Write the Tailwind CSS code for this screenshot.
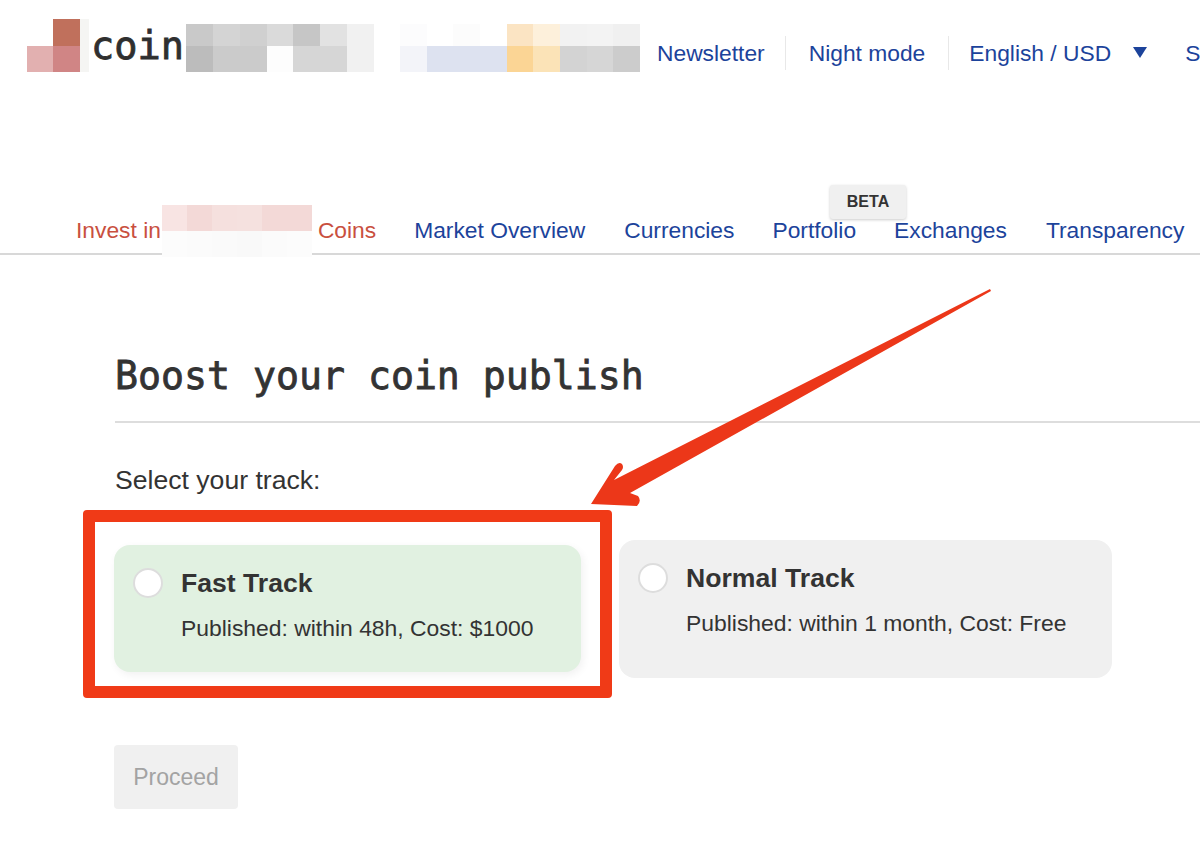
<!DOCTYPE html>
<html lang="en">
  <head>
    <meta charset="UTF-8" />
    <meta name="viewport" content="width=device-width, initial-scale=1.0" />
    <script src="https://cdn.jsdelivr.net/npm/@tailwindcss/browser@4"></script>
    <title>Boost your coin publish</title>
  </head>
  <body class="bg-white">
    <div class="relative w-[1200px] h-[846px] overflow-hidden font-['Liberation_Sans',Arial,sans-serif] text-[#333]">
      <!-- top bar -->
      <header class="flex items-start pl-[27px] pt-[19px] h-[130px] w-[1200px]">
        <div class="shrink-0 grid grid-cols-[26px_27px_9px] grid-rows-[27px_26px]">
          <div></div>
          <div class="bg-[#c0705c]"></div>
          <div class="bg-[#f5f5f3]"></div>
          <div class="bg-[#e2b0b0]"></div>
          <div class="bg-[#d08585]"></div>
          <div class="bg-[#f5f5f3]"></div>
        </div>
        <span class="shrink-0 ml-[2px] mt-[4px] w-[95px] font-['DejaVu_Sans_Mono',monospace] text-[38.6px] leading-[46px] text-[#2f2f2f] [-webkit-text-stroke:0.8px_#2f2f2f]">coin</span>
        <div class="shrink-0 mt-[5px] grid grid-cols-7 grid-rows-[22px_26px] w-[188px]">
          <div class="bg-[#c9c9c9]"></div><div class="bg-[#d4d4d4]"></div><div class="bg-[#d0d0d0]"></div><div class="bg-[#dadada]"></div><div class="bg-[#c6c6c6]"></div><div class="bg-[#e2e2e2]"></div><div class="bg-[#f1f1f1]"></div>
          <div class="bg-[#bcbcbc]"></div><div class="bg-[#cbcbcb]"></div><div class="bg-[#cbcbcb]"></div><div class="bg-[#fdfdfd]"></div><div class="bg-[#d6d6d6]"></div><div class="bg-[#d6d6d6]"></div><div class="bg-[#f1f1f1]"></div>
        </div>
        <div class="shrink-0 ml-[26px] mt-[5px] grid grid-cols-9 grid-rows-[22px_26px] w-[240px]">
          <div class="bg-[#fcfcfd]"></div><div class="bg-white"></div><div class="bg-[#fcfcfc]"></div><div class="bg-white"></div><div class="bg-[#fbe4c3]"></div><div class="bg-[#fdf0db]"></div><div class="bg-[#f2f2f2]"></div><div class="bg-[#f3f3f3]"></div><div class="bg-[#f0f0f0]"></div>
          <div class="bg-[#f3f4f9]"></div><div class="bg-[#dde2f0]"></div><div class="bg-[#dde2f0]"></div><div class="bg-[#dde2f0]"></div><div class="bg-[#fbd595]"></div><div class="bg-[#fbe3b7]"></div><div class="bg-[#d3d3d3]"></div><div class="bg-[#d6d6d6]"></div><div class="bg-[#cccccc]"></div>
        </div>
        <nav class="shrink-0 ml-[17px] mt-[17px] flex items-center whitespace-nowrap text-[22.8px] leading-[34px] text-[#1c439b]">
          <a class="pr-[20px] border-r border-[#e8e8e8]">Newsletter</a>
          <a class="px-[23px] border-r border-[#e8e8e8]">Night mode</a>
          <a class="pl-[20px]">English / USD</a>
          <svg class="ml-[22px] mt-[-2px]" width="14" height="11" viewBox="0 0 14 11"><polygon points="0,0 14,0 7,11" fill="#1c439b" /></svg>
          <a class="ml-[38px]">S</a>
        </nav>
      </header>

      <!-- main nav -->
      <nav class="relative flex items-end h-[125px] pl-[76px] border-b-2 border-[#d8d8d8] whitespace-nowrap text-[22.8px] leading-[34px] text-[#1c439b] w-[1200px]">
        <a class="mb-[6px] text-[#c9503f]">Invest in</a>
        <div class="ml-[1px] -mb-[4px] grid grid-cols-6 grid-rows-[26px_26px] w-[150px]">
          <div class="bg-[#f8e4e3]"></div><div class="bg-[#f3d9d7]"></div><div class="bg-[#f5e0de]"></div><div class="bg-[#f5e1df]"></div><div class="bg-[#f3d9d7]"></div><div class="bg-[#f3d9d7]"></div>
          <div class="bg-[#fcfcfc]"></div><div class="bg-[#fbfbfb]"></div><div class="bg-[#fafafa]"></div><div class="bg-[#f9f9f9]"></div><div class="bg-[#fbfbfb]"></div><div class="bg-[#fcfcfc]"></div>
        </div>
        <a class="mb-[6px] ml-[6px] text-[#c9503f]">Coins</a>
        <a class="mb-[6px] ml-[38px]">Market Overview</a>
        <a class="mb-[6px] ml-[39px]">Currencies</a>
        <a class="mb-[6px] ml-[38px]">Portfolio</a>
        <a class="mb-[6px] ml-[38px]">Exchanges</a>
        <a class="mb-[6px] ml-[39px]">Transparency</a>
        <span class="absolute left-[830px] top-[55px] w-[76px] h-[34px] flex items-center justify-center rounded-[3px] bg-[#f0f0f0] shadow-[0_1px_3px_rgba(0,0,0,0.2)] text-[16px] font-bold text-[#333]">BETA</span>
      </nav>

      <!-- form -->
      <main class="pl-[115px]">
        <h1 class="mt-[95px] h-[73px] border-b-2 border-[#dddddd] font-['DejaVu_Sans_Mono',monospace] text-[38.2px] leading-[52px] text-[#333] [-webkit-text-stroke:0.8px_#333]">Boost your coin publish</h1>
        <p class="mt-[41px] text-[26.6px] leading-[32px] text-[#333]">Select your track:</p>
        <div class="mt-[44px] -ml-px flex items-start">
          <div class="mt-[5px] flex w-[467px] h-[127px] rounded-[16px] bg-[#e1f1e1] pl-[19px] pt-[23px] shadow-[2px_3px_8px_rgba(0,0,0,0.06)]">
            <span class="w-[30px] h-[30px] rounded-full bg-white border-2 border-[#dddddd]"></span>
            <div class="ml-[18px]">
              <p class="text-[26.6px] leading-[30px] font-bold text-[#333]">Fast Track</p>
              <p class="mt-[15px] text-[22.9px] leading-[30px] text-[#333]">Published: within 48h, Cost: $1000</p>
            </div>
          </div>
          <div class="ml-[38px] flex w-[493px] h-[138px] rounded-[16px] bg-[#f0f0f0] pl-[19px] pt-[23px]">
            <span class="w-[30px] h-[30px] rounded-full bg-white border-2 border-[#dddddd]"></span>
            <div class="ml-[18px]">
              <p class="text-[26.6px] leading-[30px] font-bold text-[#333]">Normal Track</p>
              <p class="mt-[15px] text-[22.9px] leading-[30px] text-[#333]">Published: within 1 month, Cost: Free</p>
            </div>
          </div>
        </div>
        <button class="mt-[67px] -ml-px w-[124px] h-[64px] rounded-[4px] bg-[#f0f0f0] text-[23px] text-[#a3a3a3]">Proceed</button>
      </main>

      <!-- annotation over the page -->
      <div class="absolute left-[83px] top-[510px] w-[529px] h-[188px] border-[12px] border-[#f03a17] rounded-[4px]"></div>
      <svg class="absolute left-0 top-0" width="1200" height="846" viewBox="0 0 1200 846">
        <path d="M990 289 L991 291 L630 493 L638 496 Q642 501 637 506 L591 504 L615 466 Q619 461 622 464 Q624 467 622 470 L614 480 Z" fill="#ec3719" />
      </svg>
    </div>
  </body>
</html>
